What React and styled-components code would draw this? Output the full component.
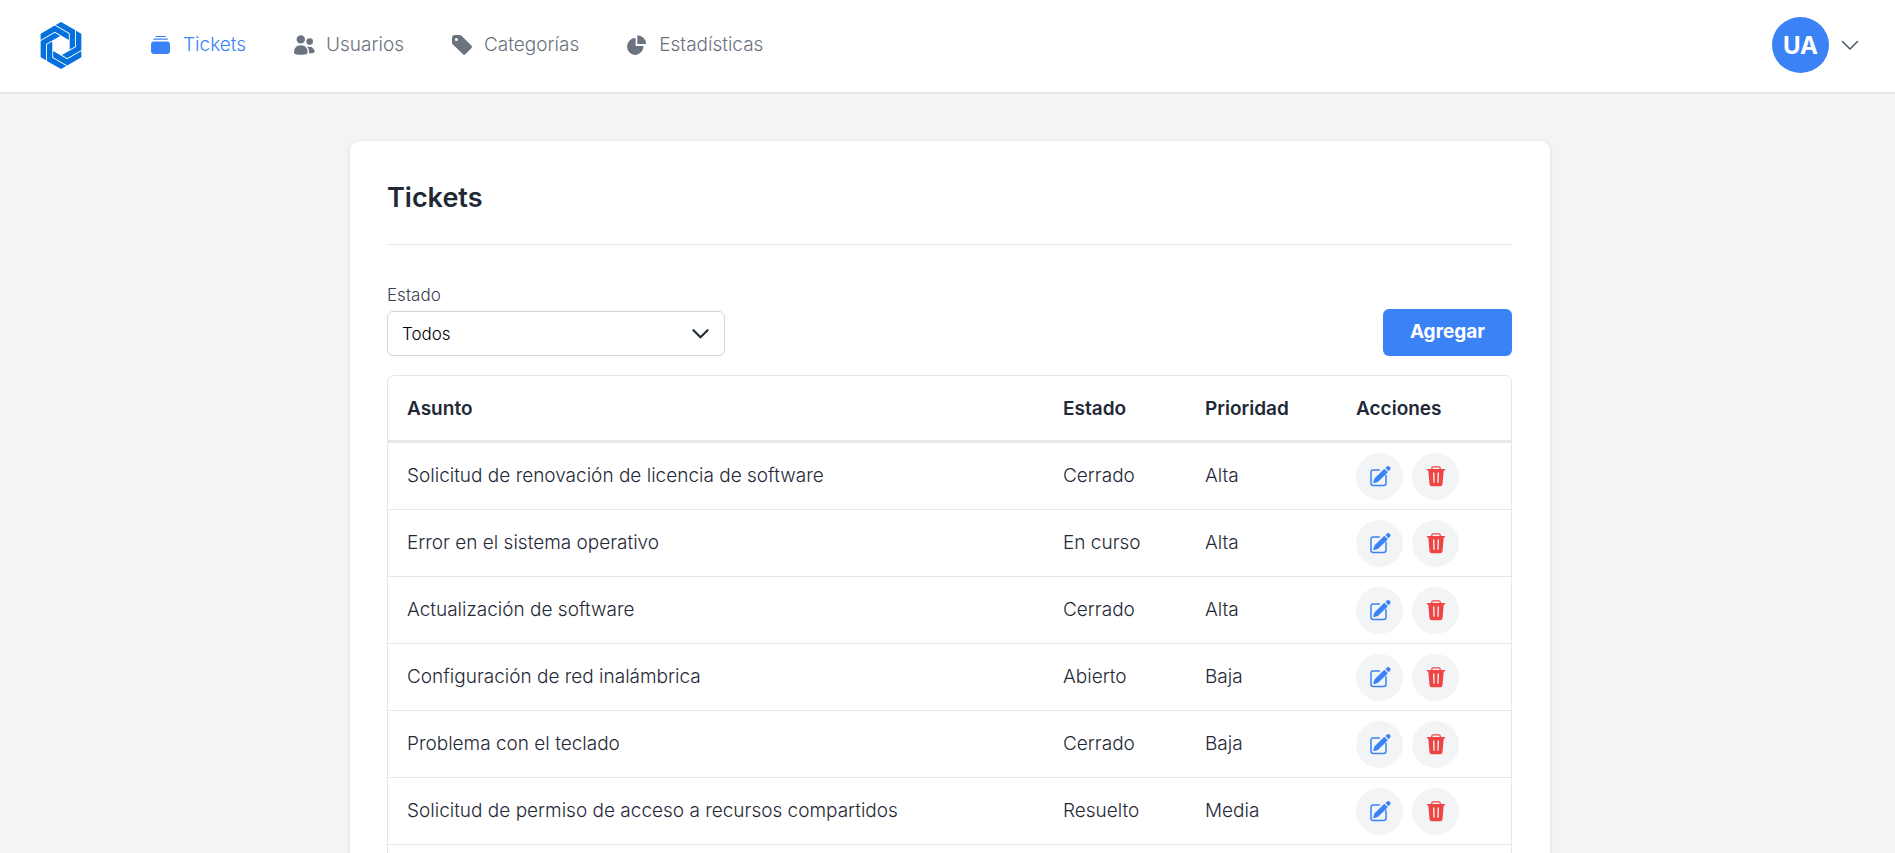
import { useState } from "react";
import { styled, createGlobalStyle } from "styled-components";

const GlobalStyle = createGlobalStyle`
  *, *::before, *::after {
    box-sizing: border-box;
  }
  body {
    margin: 0;
    background-color: #f3f4f6;
    color: #1f2937;
    font-family: Inter, "Liberation Sans", sans-serif;
    font-size: 19px;
    font-weight: 300;
    line-height: 28px;
  }
  button, select {
    font-family: inherit;
  }
`;

const Header = styled.header`
  display: flex;
  align-items: center;
  justify-content: space-between;
  padding: 17px 36px 19px 40px;
  background-color: white;
  border-bottom: 2px solid #e5e7eb;
`;
const Nav = styled.nav`
  display: flex;
  align-items: center;
  gap: 47px;
`;
const LogoLink = styled.a`
  display: flex;
  margin-right: 21px;
`;
const NavLink = styled.a`
  display: flex;
  align-items: center;
  gap: 11px;
  color: ${(props) => (props.$active ? "#3b82f6" : "#6b7280")};
  text-decoration: none;
`;
const UserButton = styled.button`
  display: flex;
  align-items: center;
  gap: 12px;
  padding: 0;
  border: none;
  background: none;
  color: #4b5563;
  cursor: pointer;
`;
const Avatar = styled.span`
  display: flex;
  align-items: center;
  justify-content: center;
  width: 57px;
  height: 56px;
  border-radius: 50%;
  background-color: #3b82f6;
  color: white;
  font-size: 24px;
  font-weight: 700;
`;

const Main = styled.main`
  padding: 47px 38px 47px 43px;
`;
const Card = styled.section`
  display: flex;
  flex-direction: column;
  max-width: 1200px;
  min-height: 100vh;
  margin: 0 auto;
  padding: 37px 38px 37px 37px;
  border-radius: 9px;
  background-color: white;
  box-shadow: 0 1px 4px rgba(0, 0, 0, 0.12);
`;
const Title = styled.h1`
  margin: 0;
  padding-bottom: 26px;
  border-bottom: 1px solid #e5e7eb;
  font-size: 27px;
  font-weight: 600;
  line-height: 40px;
`;
const Toolbar = styled.div`
  display: flex;
  align-items: flex-end;
  justify-content: space-between;
  margin: 37px 0 19px;
`;
const Field = styled.div`
  display: flex;
  flex-direction: column;
  gap: 3px;
  width: 30%;
  label {
    color: #374151;
    font-size: 17px;
    line-height: 26px;
  }
`;
const SelectBox = styled.div`
  display: grid;
  align-items: center;
  > * {
    grid-area: 1 / 1;
  }
  svg {
    justify-self: end;
    margin-right: 16px;
    pointer-events: none;
  }
`;
const Select = styled.select`
  appearance: none;
  width: 100%;
  height: 45px;
  padding: 0 14px;
  border: 1px solid #d1d5db;
  border-radius: 6px;
  background-color: white;
  color: black;
  font-size: 17px;
  font-weight: 300;
`;
const AddButton = styled.button`
  height: 47px;
  padding: 0 27px 2px;
  border: none;
  border-radius: 6px;
  background-color: #3b82f6;
  color: white;
  font-size: 19px;
  font-weight: 700;
  cursor: pointer;
`;

const TableBox = styled.div`
  flex: 1;
  border: 1px solid #e5e7eb;
  border-radius: 7px;
`;
const Table = styled.table`
  width: 100%;
  table-layout: fixed;
  border-collapse: separate;
  border-spacing: 0;
`;
const Th = styled.th`
  width: ${(props) => props.$width || "auto"};
  height: 67px;
  padding: 1px 19px 0;
  border-bottom: 3px solid #e5e7eb;
  font-weight: 600;
  text-align: left;
`;
const Td = styled.td`
  height: 67px;
  padding: 0 19px;
  border-bottom: 1px solid #e5e7eb;
`;
const Actions = styled.div`
  display: flex;
  gap: 9px;
`;
const IconButton = styled.button`
  display: flex;
  align-items: center;
  justify-content: center;
  width: 47px;
  height: 47px;
  padding: 0;
  border: none;
  border-radius: 50%;
  background-color: #f3f4f6;
  color: ${(props) => props.$color};
  cursor: pointer;
`;

const Icon = ({ children }) => (
  <svg width="22" height="22" viewBox="-1 -1 22 22" fill="currentColor">
    {children}
  </svg>
);

const TicketsIcon = () => (
  <Icon>
    <rect x="4.3" y="1" width="10.7" height="1" rx="0.5" />
    <rect x="2.3" y="3.6" width="14.6" height="1.2" rx="0.6" />
    <rect x="0" y="6.5" width="19" height="12.5" rx="3" />
  </Icon>
);

const UsersIcon = () => (
  <Icon>
    <circle cx="6.8" cy="4.4" r="4.2" />
    <path d="M0 17.4C0 13 2.6 10.2 6.8 10.2S13.6 13 13.6 17.4C13.6 19 11 19.8 6.8 19.8S0 19 0 17.4Z" />
    <circle cx="15.7" cy="6.6" r="3.3" />
    <path d="M13.2 11.9C17 10.9 20.6 13.2 20.6 16.7C20.6 17.9 18.6 18.4 15.1 18.4C15.4 15.8 14.8 13.5 13.2 11.9Z" />
  </Icon>
);

const CategoriesIcon = () => (
  <Icon>
    <path
      fillRule="evenodd"
      d="M3 0H7.4Q8.8 0 9.8 1L19.5 10.7Q20.6 11.9 19.5 13.1L13.4 19.3Q12.2 20.4 11 19.3L.9 9.6Q0 8.7 0 7.4V3Q0 0 3 0ZM4.4 2.9A1.5 1.5 0 1 0 4.4 5.9 1.5 1.5 0 1 0 4.4 2.9Z"
    />
  </Icon>
);

const StatsIcon = () => (
  <Icon>
    <path d="M8.6 3.1V10.9H16.4A8.2 8.4 0 1 1 8.6 3.1Z" />
    <path d="M10.3 0.2V9H19A8.8 8.8 0 0 0 10.3 0.2Z" />
  </Icon>
);

const EditIcon = () => (
  <Icon>
    <path
      d="M9.3 4H3.2Q1 4 1 6.2V17.3Q1 19.5 3.2 19.5H13.8Q16 19.5 16 17.3V9.5"
      fill="none"
      stroke="currentColor"
      strokeWidth="1.5"
      strokeLinecap="round"
    />
    <path
      d="M4 16.3 5.2 12.8 14.3 3.7 16.9 6.3 7.6 15.2Z"
      stroke="currentColor"
      strokeWidth="1.5"
      strokeLinejoin="round"
    />
    <path d="M15.4 2 17 .5Q18.3-.6 19.7.7T20.1 3.6L18.6 5.2Z" />
  </Icon>
);

const TrashIcon = () => (
  <Icon>
    <path
      d="M5.8 3.4V2.1Q5.8.8 7.1.8H12.9Q14.2.8 14.2 2.1V3.4"
      fill="none"
      stroke="currentColor"
      strokeWidth="1.2"
    />
    <path
      fillRule="evenodd"
      d="M1.5 3H18.5Q19.2 3 19.2 3.8T18.5 4.6H17.7L16.5 18.2Q16.3 20.2 14.3 20.2H5.7Q3.7 20.2 3.5 18.2L2.3 4.6H1.5Q.8 4.6.8 3.8T1.5 3ZM7 6.6 7.4 16.8H8.7L8.4 6.6ZM11.6 6.6 11.3 16.8H12.6L13 6.6Z"
    />
  </Icon>
);

const links = [
  { name: "Tickets", icon: TicketsIcon },
  { name: "Usuarios", icon: UsersIcon },
  { name: "Categorías", icon: CategoriesIcon },
  { name: "Estadísticas", icon: StatsIcon },
];

const tickets = [
  { id: 1, subject: "Solicitud de renovación de licencia de software", status: "Cerrado", priority: "Alta" },
  { id: 2, subject: "Error en el sistema operativo", status: "En curso", priority: "Alta" },
  { id: 3, subject: "Actualización de software", status: "Cerrado", priority: "Alta" },
  { id: 4, subject: "Configuración de red inalámbrica", status: "Abierto", priority: "Baja" },
  { id: 5, subject: "Problema con el teclado", status: "Cerrado", priority: "Baja" },
  { id: 6, subject: "Solicitud de permiso de acceso a recursos compartidos", status: "Resuelto", priority: "Media" },
];

// one bent band, repeated every 60 degrees
const Logo = () => (
  <svg width="42" height="47" viewBox="-62 -70 124 140" fill="#0670dd">
    {[0, 60, 120, 180, 240, 300].map((angle) => (
      <path
        key={angle}
        d="M0-70 42-45.8V2.8L26 12V-36.5L-16-60.8Z"
        transform={`rotate(${angle})`}
      />
    ))}
  </svg>
);

const Chevron = ({ width, stroke }) => (
  <svg width={width} height={width} viewBox="0 0 18 18" fill="none">
    <path
      d="M1.5 5.5 9 13l7.5-7.5"
      stroke="currentColor"
      strokeWidth={stroke}
      strokeLinecap="round"
      strokeLinejoin="round"
    />
  </svg>
);

const App = () => {
  const [status, setStatus] = useState("Todos");
  const rows = tickets.filter((item) => status === "Todos" || item.status === status);

  return (
    <>
      <GlobalStyle />
      <Header>
        <Nav>
          <LogoLink href="#" aria-label="Inicio">
            <Logo />
          </LogoLink>
          {links.map(({ name, icon: LinkIcon }) => (
            <NavLink key={name} href="#" $active={name === "Tickets"}>
              <LinkIcon />
              {name}
            </NavLink>
          ))}
        </Nav>
        <UserButton type="button">
          <Avatar>UA</Avatar>
          <Chevron width={18} stroke={1.5} />
        </UserButton>
      </Header>
      <Main>
        <Card>
          <Title>Tickets</Title>
          <Toolbar>
            <Field>
              <label htmlFor="status">Estado</label>
              <SelectBox>
                <Select id="status" value={status} onChange={(e) => setStatus(e.target.value)}>
                  <option>Todos</option>
                  <option>Abierto</option>
                  <option>En curso</option>
                  <option>Resuelto</option>
                  <option>Cerrado</option>
                </Select>
                <Chevron width={17} stroke={2.2} />
              </SelectBox>
            </Field>
            <AddButton type="button">Agregar</AddButton>
          </Toolbar>
          <TableBox>
            <Table>
              <thead>
                <tr>
                  <Th>Asunto</Th>
                  <Th $width="142px">Estado</Th>
                  <Th $width="151px">Prioridad</Th>
                  <Th $width="174px">Acciones</Th>
                </tr>
              </thead>
              <tbody>
                {rows.map((item) => (
                  <tr key={item.id}>
                    <Td>{item.subject}</Td>
                    <Td>{item.status}</Td>
                    <Td>{item.priority}</Td>
                    <Td>
                      <Actions>
                        <IconButton type="button" $color="#3b82f6" aria-label="Editar">
                          <EditIcon />
                        </IconButton>
                        <IconButton type="button" $color="#ef4444" aria-label="Eliminar">
                          <TrashIcon />
                        </IconButton>
                      </Actions>
                    </Td>
                  </tr>
                ))}
              </tbody>
            </Table>
          </TableBox>
        </Card>
      </Main>
    </>
  );
};

export default App;
